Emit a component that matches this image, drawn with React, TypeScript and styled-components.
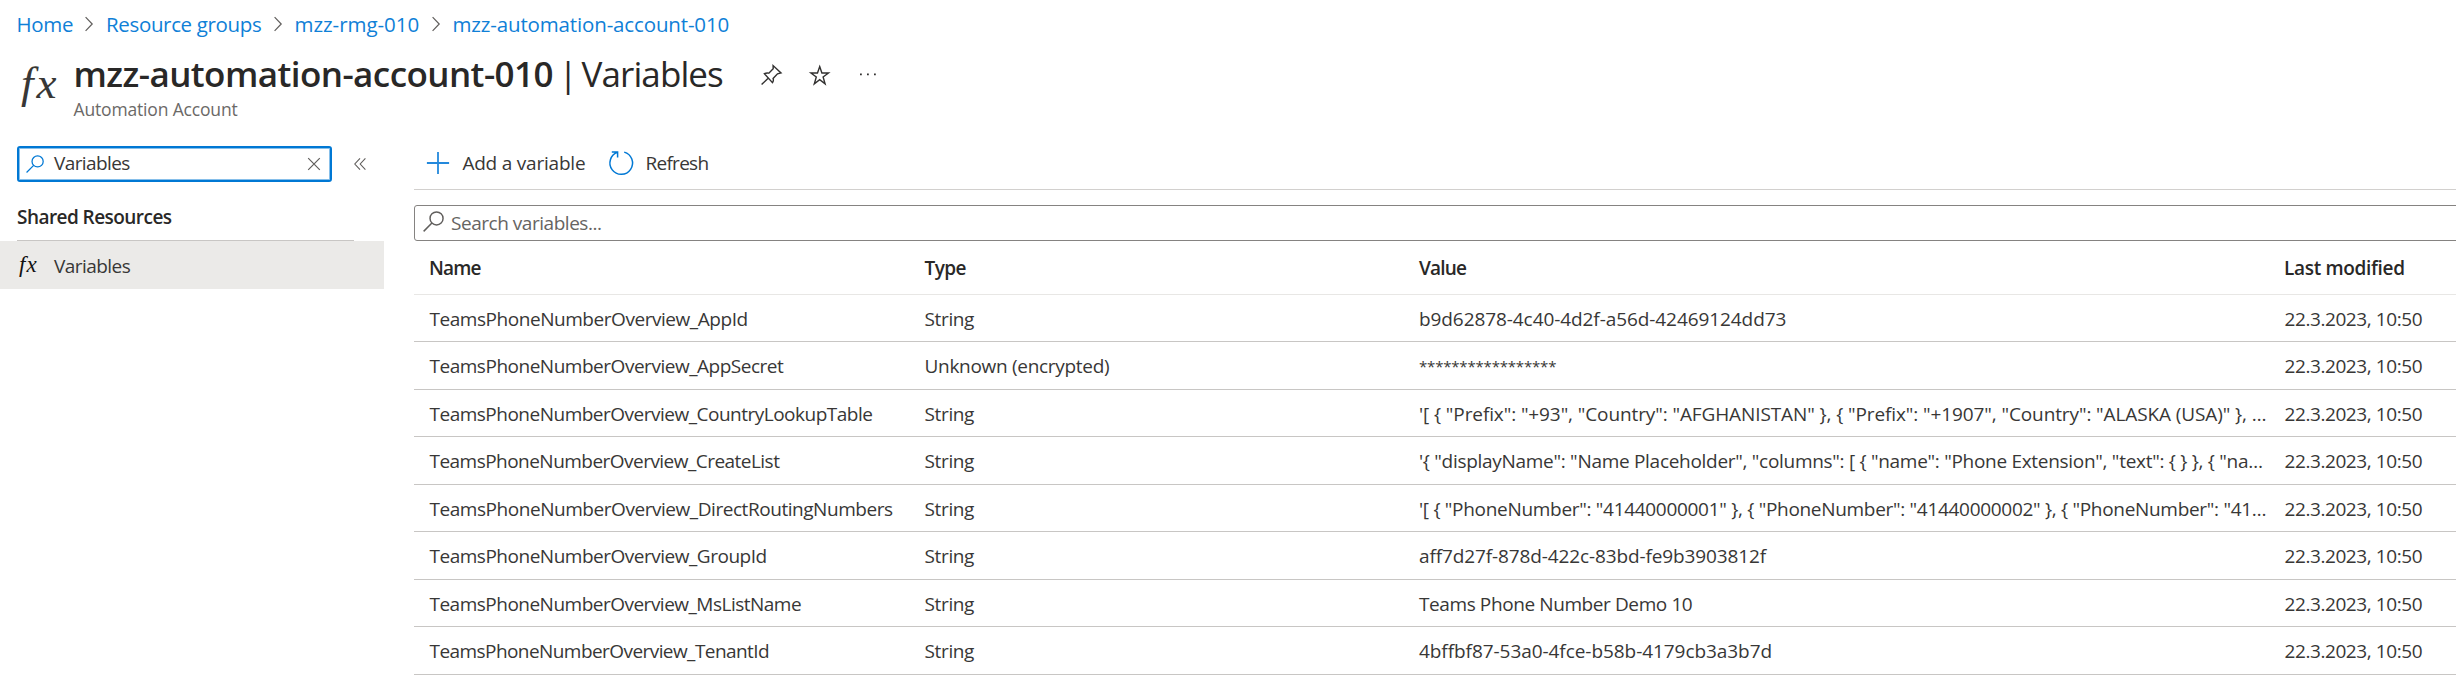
import React from 'react';
import styled, { createGlobalStyle } from 'styled-components';

const GlobalStyle = createGlobalStyle`
  * { box-sizing: border-box; }
  body {
    margin: 0;
    background: #fff;
    color: #383736;
    font-family: "Open Sans", "Noto Sans", sans-serif;
    font-size: 19px;
    overflow: hidden;
  }
  svg { display: block; flex: none; overflow: visible; }
`;

const Page = styled.div`
  width: 2456px;
  height: 692px;
  overflow: hidden;
  background: #fff;
`;

/* Text with its own tracking */
const Label = styled.span<{ $track?: number }>`
  letter-spacing: ${(p) => p.$track ?? 0}px;
  white-space: pre;
`;

const Breadcrumb = styled.nav`
  display: flex;
  align-items: center;
  height: 28px;
  margin-top: 10px;
  padding-left: 16.5px;
  font-size: 20.5px;
  line-height: 28px;
`;

const Crumb = styled.a<{ $width: number; $track: number }>`
  flex: none;
  width: ${(p) => p.$width}px;
  color: #0f80d7;
  letter-spacing: ${(p) => p.$track}px;
  white-space: nowrap;
  text-decoration: none;
`;

const CrumbGap = styled.span`
  flex: none;
  width: 34px;
  padding-left: 13px;
`;

const Header = styled.header`
  display: flex;
  height: 83px;
  padding: 12px 0 0 21px;
`;

const HeaderIcon = styled.div`
  width: 52.5px;
  padding-top: 3px;
  font: italic 45px/60px "Liberation Serif", serif;
  letter-spacing: 3px;
`;

const TitleRow = styled.div`
  display: flex;
  align-items: center;
  height: 46px;
`;

const Title = styled.h1`
  display: flex;
  margin: 0;
  padding-top: 2px;
  width: 686.5px;
  color: #292827;
  font-size: 35px;
  line-height: 46px;
  font-weight: 400;
`;

const ResourceName = styled.span`
  width: 485px;
  font-weight: 600;
  letter-spacing: -0.563px;
`;

const TitleBar = styled.span`
  width: 23px;
`;

const TitleActions = styled.div`
  display: flex;
  align-items: center;
  gap: 24px;
  padding-top: 4px;
`;

const Subtitle = styled.div`
  margin-top: 1px;
  color: #6b6967;
  font-size: 17.5px;
  line-height: 24px;
`;

const Body = styled.div`
  display: flex;
  margin-top: 25px;
`;

const Sidebar = styled.aside`
  flex: none;
  width: 414px;
`;

const SidebarTools = styled.div`
  display: flex;
  align-items: center;
  padding-left: 17px;
  gap: 22px;
`;

const MenuSearch = styled.div`
  display: flex;
  align-items: center;
  width: 315px;
  height: 36px;
  padding: 0 10px 0 7px;
  border: 2px solid #0078d4;
  border-radius: 3px;
  box-shadow: inset 0 0 0 1px #86bfea;
`;

const MenuSearchText = styled(Label)`
  flex: 1;
  padding: 0 0 3px 10px;
`;

const GroupHeading = styled.div`
  height: 59px;
  width: 337px;
  margin-left: 17px;
  padding-top: 12px;
  border-bottom: 1px solid #c8c6c4;
  color: #292827;
  font-weight: 600;
  line-height: 46px;
`;

const MenuItem = styled.div`
  display: flex;
  align-items: center;
  width: 384px;
  height: 48px;
  padding: 1px 0 0 19px;
  background: #ebeae8;
`;

const MenuItemIcon = styled.span`
  width: 35px;
  color: #111;
  font: italic 23px/30px "Liberation Serif", serif;
  letter-spacing: 1.2px;
  padding-bottom: 1px;
`;

const Main = styled.main`
  flex: 1;
  min-width: 0;
`;

const Toolbar = styled.div`
  display: flex;
  align-items: center;
  height: 44px;
  padding: 0 0 10px 12px;
  border-bottom: 1px solid #d2d0ce;
`;

const ToolButton = styled.div<{ $width: number }>`
  display: flex;
  align-items: center;
  gap: 12.4px;
  width: ${(p) => p.$width}px;
`;

const FilterBox = styled.div`
  display: flex;
  align-items: center;
  height: 36px;
  width: 2060px;
  margin-top: 15px;
  padding-left: 8px;
  border: 1px solid #858381;
  border-radius: 3px;
  color: #666462;
`;

const FilterIcon = styled.span`
  width: 28px;
  padding-bottom: 3px;
`;

const Row = styled.div`
  display: grid;
  grid-template-columns: 495px 494.5px 865.5px 1fr;
  align-items: center;
  height: 47px;
  padding: 1px 0 0 15.5px;
  border-bottom: 1px solid #c8c6c4;
  &:nth-child(odd) { height: 48px; }
`;

const HeadRow = styled(Row)`
  && { height: 54px; }
  grid-template-columns: 495.5px 494.5px 865px 1fr;
  padding-top: 0;
  padding-left: 15px;
  border-bottom-color: #e8e7e5;
  color: #292827;
  font-weight: 600;
`;

const Masked = styled(Label)`
  font-size: 15px;
`;

const Chevron = () => (
  <svg width="8" height="16" viewBox="0 0 8 16" fill="none" stroke="#605e5c" strokeWidth="1.2">
    <path d="M.6 1.2 7.2 8 .6 14.8" />
  </svg>
);

const PinIcon = () => (
  <svg width="24" height="24" viewBox="0 0 24 24" fill="none" stroke="#323130" strokeWidth="1.4">
    <path d="M4.4 10.7C6 9.9 7.4 9.8 8.8 10.2l4.4-4.5-.1-3.1 7.9 7.3-3.5.9-4.4 4.7c.6 1.6.3 2.9-.6 4.2zM7.9 15.4 1.6 21.6" />
  </svg>
);

const StarIcon = () => (
  <svg width="24" height="24" viewBox="0 0 24 24" fill="none" stroke="#323130" strokeWidth="1.4">
    <path d="m11.7 3.6 2.2 6.4h6.6l-5.4 4 2 6.8-5.4-4.1-5.4 4.1 2-6.8-5.4-4h6.6z" />
  </svg>
);

const MoreIcon = () => (
  <svg width="24" height="24" viewBox="0 0 24 24" fill="#323130">
    <path d="M4 10.4h1.8v1.8H4zm7 0h1.8v1.8H11zm7 0h1.8v1.8H18z" />
  </svg>
);

const SearchIcon = ({ size, color }: { size: number; color: string }) => (
  <svg width={size} height={size} viewBox="0 0 20 20" fill="none" stroke={color} strokeWidth="1.4">
    <circle cx="12.9" cy="7.1" r="6.2" />
    <path d="M8.5 11.5.6 19.4" />
  </svg>
);

const ClearIcon = () => (
  <svg width="12" height="12" viewBox="0 0 12 12" stroke="#605e5c" strokeWidth="1.2">
    <path d="m.2.2 11.6 11.6M11.8.2.2 11.8" />
  </svg>
);

const CollapseIcon = () => (
  <svg width="12" height="12" viewBox="0 0 12 12" fill="none" stroke="#605e5c" strokeWidth="1.1">
    <path d="M6 .3.8 6 6 11.7M11.4.3 6.2 6l5.2 5.7" />
  </svg>
);

const PlusIcon = () => (
  <svg width="24" height="24" viewBox="0 0 24 24" stroke="#2489dc" strokeWidth="1.8">
    <path d="M12 .9v22.2M.9 12h22.2" />
  </svg>
);

const RefreshIcon = () => (
  <svg width="24" height="24" viewBox="0 0 24 24" fill="none" stroke="#0078d4" strokeWidth="1.5">
    <path d="M15.2 1.1A11.3 11.3 0 1 1 8.6 1.3M2.8.9h5.8v5.5" />
  </svg>
);

interface Variable {
  name: string;
  nameTrack: number;
  type: string;
  value: string;
  valueTrack: number;
  masked?: boolean;
}

const variables: Variable[] = [
  { name: 'AppId', nameTrack: -0.45, type: 'String', value: 'b9d62878-4c40-4d2f-a56d-42469124dd73', valueTrack: -0.08 },
  { name: 'AppSecret', nameTrack: -0.48, type: 'Unknown (encrypted)', value: '*****************', valueTrack: -0.19, masked: true },
  { name: 'CountryLookupTable', nameTrack: -0.5, type: 'String', value: '\'[ { "Prefix": "+93", "Country": "AFGHANISTAN" }, { "Prefix": "+1907", "Country": "ALASKA (USA)" }, …', valueTrack: -0.104 },
  { name: 'CreateList', nameTrack: -0.53, type: 'String', value: '\'{ "displayName": "Name Placeholder", "columns": [ { "name": "Phone Extension", "text": { } }, { "na…', valueTrack: -0.293 },
  { name: 'DirectRoutingNumbers', nameTrack: -0.45, type: 'String', value: '\'[ { "PhoneNumber": "41440000001" }, { "PhoneNumber": "41440000002" }, { "PhoneNumber": "41…', valueTrack: -0.304 },
  { name: 'GroupId', nameTrack: -0.486, type: 'String', value: 'aff7d27f-878d-422c-83bd-fe9b3903812f', valueTrack: -0.12 },
  { name: 'MsListName', nameTrack: -0.505, type: 'String', value: 'Teams Phone Number Demo 10', valueTrack: -0.4 },
  { name: 'TenantId', nameTrack: -0.564, type: 'String', value: '4bffbf87-53a0-4fce-b58b-4179cb3a3b7d', valueTrack: -0.06 },
];

export default function App() {
  return (
    <Page>
      <GlobalStyle />
      <Breadcrumb>
        <Crumb $width={55.5} $track={-0.308}>Home</Crumb>
        <CrumbGap><Chevron /></CrumbGap>
        <Crumb $width={154.5} $track={-0.345}>Resource groups</Crumb>
        <CrumbGap><Chevron /></CrumbGap>
        <Crumb $width={124} $track={-0.032}>mzz-rmg-010</Crumb>
        <CrumbGap><Chevron /></CrumbGap>
        <Crumb $width={290} $track={-0.144}>mzz-automation-account-010</Crumb>
      </Breadcrumb>

      <Header>
        <HeaderIcon>fx</HeaderIcon>
        <div>
          <TitleRow>
            <Title>
              <ResourceName>mzz-automation-account-010</ResourceName>
              <TitleBar>|</TitleBar>
              <Label $track={-0.9}>Variables</Label>
            </Title>
            <TitleActions>
              <PinIcon />
              <StarIcon />
              <MoreIcon />
            </TitleActions>
          </TitleRow>
          <Subtitle><Label $track={-0.163}>Automation Account</Label></Subtitle>
        </div>
      </Header>

      <Body>
        <Sidebar>
          <SidebarTools>
            <MenuSearch>
              <SearchIcon size={18} color="#0078d4" />
              <MenuSearchText $track={-0.6}>Variables</MenuSearchText>
              <ClearIcon />
            </MenuSearch>
            <CollapseIcon />
          </SidebarTools>
          <GroupHeading><Label $track={-0.55}>Shared Resources</Label></GroupHeading>
          <MenuItem>
            <MenuItemIcon>fx</MenuItemIcon>
            <Label $track={-0.55}>Variables</Label>
          </MenuItem>
        </Sidebar>

        <Main>
          <Toolbar>
            <ToolButton $width={183}>
              <PlusIcon />
              <Label $track={-0.214}>Add a variable</Label>
            </ToolButton>
            <ToolButton $width={110}>
              <RefreshIcon />
              <Label $track={-0.7}>Refresh</Label>
            </ToolButton>
          </Toolbar>
          <FilterBox>
            <FilterIcon><SearchIcon size={21} color="#605e5c" /></FilterIcon>
            <Label $track={-0.466}>Search variables...</Label>
          </FilterBox>
          <div>
            <HeadRow>
              <Label $track={-0.843}>Name</Label>
              <Label $track={-0.57}>Type</Label>
              <Label $track={-0.807}>Value</Label>
              <Label $track={-0.317}>Last modified</Label>
            </HeadRow>
            {variables.map((v) => (
              <Row key={v.name}>
                <Label $track={v.nameTrack}>{`TeamsPhoneNumberOverview_${v.name}`}</Label>
                <Label $track={v.type === 'String' ? -0.36 : -0.3}>{v.type}</Label>
                {v.masked
                  ? <Masked $track={v.valueTrack}>{v.value}</Masked>
                  : <Label $track={v.valueTrack}>{v.value}</Label>}
                <Label $track={-0.42}>22.3.2023, 10:50</Label>
              </Row>
            ))}
          </div>
        </Main>
      </Body>
    </Page>
  );
}
